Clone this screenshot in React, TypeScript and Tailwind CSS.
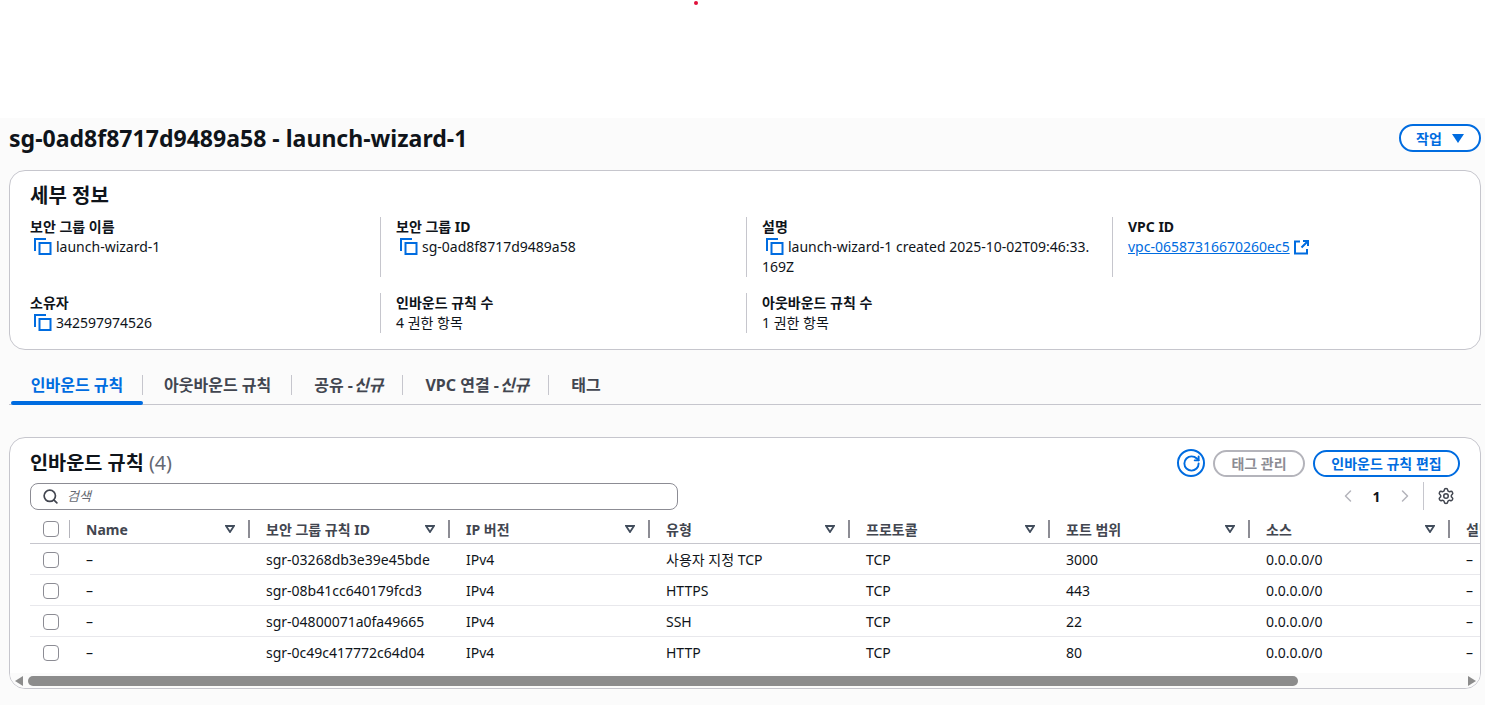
import { Search, ChevronLeft, ChevronRight, Settings, RotateCw } from 'lucide-react';

const FONT = 'font-["Noto_Sans","Noto_Sans_CJK_KR",sans-serif]';

function CopyIcon() {
  return (
    <svg width="18" height="18" viewBox="0 0 18 18" fill="none" stroke="#006ce0" strokeWidth="2" className="shrink-0">
      <path d="M1 13V1h11" />
      <rect x="5.5" y="5" width="11" height="11" />
    </svg>
  );
}

function LinkIcon() {
  return (
    <svg width="15" height="15" viewBox="0 0 15 15" fill="none" stroke="#006ce0" strokeWidth="2" className="ml-[4px] shrink-0">
      <path d="M6 1.5H1v12h12V9" />
      <path d="M9 1h5v5M14 1L7.5 7.5" />
    </svg>
  );
}

function SortIcon() {
  return (
    <svg width="10" height="8" viewBox="0 0 10 8" fill="none" stroke="#414d5c" strokeWidth="1.8">
      <path d="M1 1h8L5 7z" />
    </svg>
  );
}

function Field({ label, children, first }: { label: string; children: React.ReactNode; first?: boolean }) {
  return (
    <div className={first ? 'pr-4' : 'border-l border-[#c6c6cd] pl-[15px] pr-4'}>
      <div className="text-[14px] leading-[20px] font-bold text-[#0f141a]">{label}</div>
      {children}
    </div>
  );
}

function CopyValue({ children }: { children: React.ReactNode }) {
  return (
    <div className="flex items-start text-[14px] leading-[20px] text-[#0f141a]">
      <span className="ml-[4px] mr-[4px] mt-[1px]"><CopyIcon /></span>
      <span>{children}</span>
    </div>
  );
}

const columns = ['보안 그룹 규칙 ID', 'IP 버전', '유형', '프로토콜', '포트 범위', '소스'];

const rows = [
  ['sgr-03268db3e39e45bde', 'IPv4', '사용자 지정 TCP', 'TCP', '3000', '0.0.0.0/0'],
  ['sgr-08b41cc640179fcd3', 'IPv4', 'HTTPS', 'TCP', '443', '0.0.0.0/0'],
  ['sgr-04800071a0fa49665', 'IPv4', 'SSH', 'TCP', '22', '0.0.0.0/0'],
  ['sgr-0c49c417772c64d04', 'IPv4', 'HTTP', 'TCP', '80', '0.0.0.0/0'],
];

const tabs = [
  { label: '인바운드 규칙' },
  { label: '아웃바운드 규칙' },
  { label: '공유 -', em: '신규' },
  { label: 'VPC 연결 -', em: '신규' },
  { label: '태그' },
];

function Checkbox() {
  return <div className="w-[16px] h-[16px] rounded-[4px] border border-[#8c8c94] bg-white" />;
}

export default function App() {
  return (
    <div className={`${FONT} w-[1485px] h-[705px] overflow-hidden bg-[#fbfbfb] text-[#0f141a]`}>
      {/* 上の白い帯 */}
      <div className="h-[118px] bg-white pl-[694px] pt-[1px]">
        <div className="w-[4px] h-[4px] rounded-full bg-[#e0103a]" />
      </div>

      <div className="pl-[9px] pr-[4px]">
        <div className="flex items-center justify-between h-[40px]">
          <h1 className="text-[23.05px] leading-[40px] font-bold">sg-0ad8f8717d9489a58 - launch-wizard-1</h1>
          <button className="flex items-center justify-center gap-[10px] w-[82px] h-[28px] rounded-full border-2 border-[#006ce0] bg-white text-[14px] font-bold text-[#006ce0]">
            작업
            <svg width="12" height="9" viewBox="0 0 12 9" fill="#006ce0"><path d="M0 0h12L6 9z" /></svg>
          </button>
        </div>

        {/* 세부 정보 */}
        <section className="mt-[12px] h-[180px] rounded-[16px] border border-[#c6c6cd] bg-white pl-[20px] pt-[12px]">
          <h2 className="text-[20px] leading-[26px] font-bold">세부 정보</h2>
          <div className="mt-[8px] grid grid-cols-[350px_366px_366px_366px] grid-rows-[60px_40px] gap-y-[16px]">
            <Field label="보안 그룹 이름" first><CopyValue>launch-wizard-1</CopyValue></Field>
            <Field label="보안 그룹 ID"><CopyValue>sg-0ad8f8717d9489a58</CopyValue></Field>
            <Field label="설명"><CopyValue>launch-wizard-1 created 2025-10-02T09:46:33.</CopyValue><div className="text-[14px] leading-[20px]">169Z</div></Field>
            <Field label="VPC ID">
              <a className="flex items-center text-[14px] leading-[20px] text-[#006ce0] underline">
                vpc-06587316670260ec5
                <LinkIcon />
              </a>
            </Field>
            <Field label="소유자" first><CopyValue>342597974526</CopyValue></Field>
            <Field label="인바운드 규칙 수"><div className="text-[14px] leading-[20px]">4 권한 항목</div></Field>
            <Field label="아웃바운드 규칙 수"><div className="text-[14px] leading-[20px]">1 권한 항목</div></Field>
          </div>
        </section>

        {/* 탭 */}
        <div className="mt-[20px] pl-[2px] h-[35px] flex items-start border-b border-[#c6c6cd]">
          {tabs.map((tab, i) => (
            <div key={tab.label} className={`relative h-[35px] flex items-center ${i === 0 ? 'w-[132px] justify-center text-[#006ce0]' : i === 1 ? 'pl-[21px] pr-[21px] text-[#424650]' : 'pl-[22px] pr-[20px] text-[#424650]'} text-[16px] font-bold`}>
              <span className="mt-[-5px]">{tab.label}{tab.em && <em className="italic ml-[1px]">{tab.em}</em>}</span>
              {i < tabs.length - 1 && <span className="absolute right-0 top-[5px] h-[20px] border-r border-[#c6c6cd]" />}
              {i === 0 && <span className="absolute left-0 right-0 bottom-0 h-[4px] rounded-[2px] bg-[#006ce0]" />}
            </div>
          ))}
        </div>

        {/* 인바운드 규칙 */}
        <section className="relative mt-[32px] h-[252px] rounded-[16px] border border-[#c6c6cd] bg-white overflow-hidden">
          <div className="pl-[20px] pr-[20px] flex items-start justify-between pt-[10px]">
            <h2 className="text-[19.7px] leading-[30px] font-bold">인바운드 규칙 <span className="font-normal text-[#656871]">(4)</span></h2>
            <div className="flex items-center gap-[8px] pt-[1px]">
              <span className="w-[28px] h-[28px] rounded-full border-2 border-[#006ce0] flex items-center justify-center text-[#006ce0]">
                <RotateCw size={19} strokeWidth={2.4} />
              </span>
              <button className="w-[92px] h-[27px] rounded-full border-2 border-[#b4b4bb] text-[14px] font-bold text-[#8c8c94]">태그 관리</button>
              <button className="w-[147px] h-[27px] rounded-full border-2 border-[#006ce0] text-[14px] font-bold text-[#006ce0]">인바운드 규칙 편집</button>
            </div>
          </div>

          <div className="pl-[20px] pr-[25px] flex items-start justify-between mt-[5px] h-[32px]">
            <div className="w-[648px] h-[27px] rounded-[8px] border border-[#8c8c94] flex items-center pl-[11px] gap-[8px]">
              <Search size={17} strokeWidth={2.4} className="text-[#424650]" />
              <span className="text-[13px] italic text-[#656871]">검색</span>
            </div>
            <div className="flex items-center h-[28px] mt-[-1px]">
              <ChevronLeft size={20} strokeWidth={1.8} className="text-[#b4b4bb]" />
              <span className="w-[37px] text-center text-[14px] font-bold text-[#0f141a]">1</span>
              <ChevronRight size={20} strokeWidth={1.8} className="text-[#b4b4bb]" />
              <span className="ml-[8px] h-[28px] border-l border-[#c6c6cd]" />
              <Settings size={18} strokeWidth={2} className="ml-[13px] text-[#424650]" />
            </div>
          </div>

          {/* 테이블 */}
          <div className="ml-[20px] w-[1451px] overflow-hidden">
            <div className="w-[1700px]">
              <div className="flex h-[29px] items-center text-[14px] font-bold text-[#424650] border-b border-[#c6c6cd]">
                <div className="w-[40px] h-full flex items-center pl-[13px] relative">
                  <Checkbox />
                  <span className="absolute right-0 top-[5px] h-[18px] border-r border-[#b4b4bb]" />
                </div>
                <div className="w-[180px] pl-[16px] pr-[15px] flex items-center justify-between relative h-full">
                  Name
                  <SortIcon />
                  <span className="absolute right-0 top-[5px] h-[18px] border-r-2 border-[#8c8c94]" />
                </div>
                {columns.map(c => (
                  <div key={c} className="w-[200px] pl-[16px] pr-[15px] flex items-center justify-between relative h-full">
                    {c}
                    <SortIcon />
                    <span className="absolute right-0 top-[5px] h-[18px] border-r-2 border-[#8c8c94]" />
                  </div>
                ))}
                <div className="w-[100px] pl-[16px]">설명</div>
              </div>
              {rows.map((row, i) => (
                <div key={row[0]} className={`flex h-[31px] items-center text-[14px] border-b ${i < rows.length - 1 ? 'border-[#e8e8ec]' : 'border-transparent'}`}>
                  <div className="w-[40px] pl-[13px] pt-[2px]"><Checkbox /></div>
                  <div className="w-[180px] pl-[16px]">–</div>
                  {row.map((cell, j) => (
                    <div key={j} className="w-[200px] pl-[16px]">{cell}</div>
                  ))}
                  <div className="w-[100px] pl-[16px]">–</div>
                </div>
              ))}
            </div>
          </div>

          {/* 스크롤바 */}
          <div className="absolute left-0 right-0 bottom-0 h-[15px] bg-[#fbfbfb] flex items-center">
            <svg width="8" height="10" viewBox="0 0 8 10" fill="#8c8c8c" className="ml-[5px]"><path d="M8 0v10L0 5z" /></svg>
            <div className="ml-[5px] w-[1270px] h-[10px] rounded-full bg-[#8c8c8c]" />
            <svg width="8" height="10" viewBox="0 0 8 10" fill="#8c8c8c" className="ml-auto mr-[4px]"><path d="M0 0v10l8-5z" /></svg>
          </div>
        </section>
      </div>
    </div>
  );
}
